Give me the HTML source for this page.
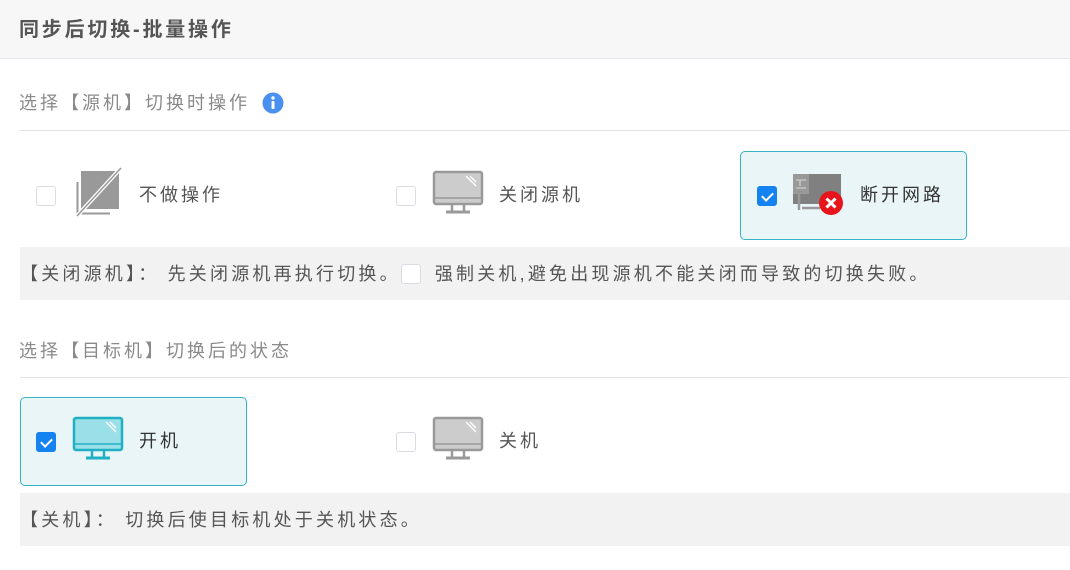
<!DOCTYPE html>
<html><head><meta charset="utf-8"><style>
*{margin:0;padding:0;box-sizing:border-box}
body{width:1070px;height:570px;background:#fff;font-family:"Liberation Sans","Noto Sans CJK SC",sans-serif;position:relative;overflow:hidden;color:#555}
.abs{position:absolute;white-space:nowrap}
.hdr{left:0;top:0;width:1070px;height:59px;background:#f7f7f7;border-bottom:1px solid #e6e9ee}
.title{left:19px;top:16px;font-size:20px;font-weight:bold;color:#555;line-height:28px;letter-spacing:2.8px}
.lbl{font-size:18px;color:#8a8a8a;line-height:24px;letter-spacing:3px}
.line{left:20px;width:1050px;height:1px;background:#e3e3e3}
.cb{width:20px;height:20px;border:1px solid #d9dce3;border-radius:3px;background:#fff}
.cb.on{background:#1482f0;border-color:#1482f0}
.cb.on::after{content:"";position:absolute;left:6px;top:3px;width:5px;height:9px;border:solid #fff;border-width:0 2px 2px 0;transform:rotate(45deg)}
.txt{font-size:18px;color:#555;line-height:24px;letter-spacing:3px}
.sel{border:1px solid #36b3c7;border-radius:5px;background:#e9f5f7}
.note{left:20px;width:1050px;background:#f2f2f2;font-size:18px;color:#555;line-height:24px;letter-spacing:3.2px}
</style></head><body>
<div class="abs hdr"></div>
<div class="abs title">同步后切换-批量操作</div>

<div class="abs lbl" style="left:19px;top:91px">选择【源机】切换时操作</div>
<svg class="abs" style="left:262px;top:92px" width="22" height="22" viewBox="0 0 22 22"><circle cx="11" cy="11" r="10.5" fill="#4a90f0"/><circle cx="11" cy="6" r="1.7" fill="#fff"/><rect x="9.5" y="9" width="3" height="8" rx="1" fill="#fff"/></svg>
<div class="abs line" style="top:130px"></div>

<div class="abs cb" style="left:36px;top:186px"></div>
<svg class="abs" style="left:74px;top:166px" width="50" height="52" viewBox="0 0 50 52"><rect x="7" y="5" width="38" height="38" fill="#999"/><path d="M3.5 16V47.5H36" stroke="#999" stroke-width="2" fill="none"/><path d="M3 50L47 2" stroke="#fff" stroke-width="4"/><path d="M3 50L47 2" stroke="#999" stroke-width="1.5"/></svg>
<div class="abs txt" style="left:139px;top:183px">不做操作</div>

<div class="abs cb" style="left:396px;top:186px"></div>
<svg class="abs" style="left:432px;top:170px" width="52" height="44" viewBox="0 0 52 44"><rect x="2" y="2" width="48" height="32" rx="2" fill="#ccc" stroke="#999" stroke-width="2.5"/><line x1="3" y1="28" x2="49" y2="28" stroke="#999" stroke-width="1.5"/><path d="M38 6l6 6M34 6l10 10" stroke="#fff" stroke-width="1.3"/><path d="M20 35v6M32 35v6" stroke="#999" stroke-width="2.5"/><path d="M14 42h24" stroke="#999" stroke-width="3"/></svg>
<div class="abs txt" style="left:499px;top:183px">关闭源机</div>

<div class="abs sel" style="left:740px;top:151px;width:227px;height:89px"></div>
<div class="abs cb on" style="left:757px;top:186px"></div>
<svg class="abs" style="left:790px;top:170px" width="56" height="48" viewBox="0 0 56 48"><rect x="3" y="4" width="48" height="30" fill="#808080"/><rect x="3" y="4" width="16" height="20" fill="#999"/><path d="M6 10h10M10 10v6M6 18h10" stroke="#ccc" stroke-width="1.3" fill="none"/><path d="M9 24v16M12 38h18" stroke="#999" stroke-width="2.5" fill="none"/><circle cx="41" cy="33" r="12" fill="#e8141b"/><path d="M36.5 28.5l9 9M45.5 28.5l-9 9" stroke="#fff" stroke-width="3"/></svg>
<div class="abs txt" style="left:860px;top:183px;color:#333">断开网路</div>

<div class="abs note" style="top:247px;height:53px;padding:15px 0 0 0">【关闭源机】： 先关闭源机再执行切换。<span style="display:inline-block;width:20px;height:20px;border:1px solid #d9dce3;border-radius:3px;background:#fff;vertical-align:-4px;margin:0 14px 0 0"></span>强制关机,避免出现源机不能关闭而导致的切换失败。</div>

<div class="abs lbl" style="left:19px;top:339px">选择【目标机】切换后的状态</div>
<div class="abs line" style="top:377px"></div>

<div class="abs sel" style="left:20px;top:397px;width:227px;height:89px"></div>
<div class="abs cb on" style="left:36px;top:432px"></div>
<svg class="abs" style="left:72px;top:416px" width="52" height="44" viewBox="0 0 52 44"><rect x="2" y="2" width="48" height="32" rx="2" fill="#9be0e8" stroke="#1fb0c4" stroke-width="2.5"/><line x1="3" y1="28" x2="49" y2="28" stroke="#1fb0c4" stroke-width="1.5"/><path d="M38 6l6 6M34 6l10 10" stroke="#fff" stroke-width="1.3"/><path d="M20 35v6M32 35v6" stroke="#1fb0c4" stroke-width="2.5"/><path d="M14 42h24" stroke="#1fb0c4" stroke-width="3"/></svg>
<div class="abs txt" style="left:139px;top:429px;color:#333">开机</div>

<div class="abs cb" style="left:396px;top:432px"></div>
<svg class="abs" style="left:432px;top:416px" width="52" height="44" viewBox="0 0 52 44"><rect x="2" y="2" width="48" height="32" rx="2" fill="#ccc" stroke="#999" stroke-width="2.5"/><line x1="3" y1="28" x2="49" y2="28" stroke="#999" stroke-width="1.5"/><path d="M38 6l6 6M34 6l10 10" stroke="#fff" stroke-width="1.3"/><path d="M20 35v6M32 35v6" stroke="#999" stroke-width="2.5"/><path d="M14 42h24" stroke="#999" stroke-width="3"/></svg>
<div class="abs txt" style="left:499px;top:429px">关机</div>

<div class="abs note" style="top:493px;height:53px;padding:15px 0 0 0">【关机】： 切换后使目标机处于关机状态。</div>
</body></html>
